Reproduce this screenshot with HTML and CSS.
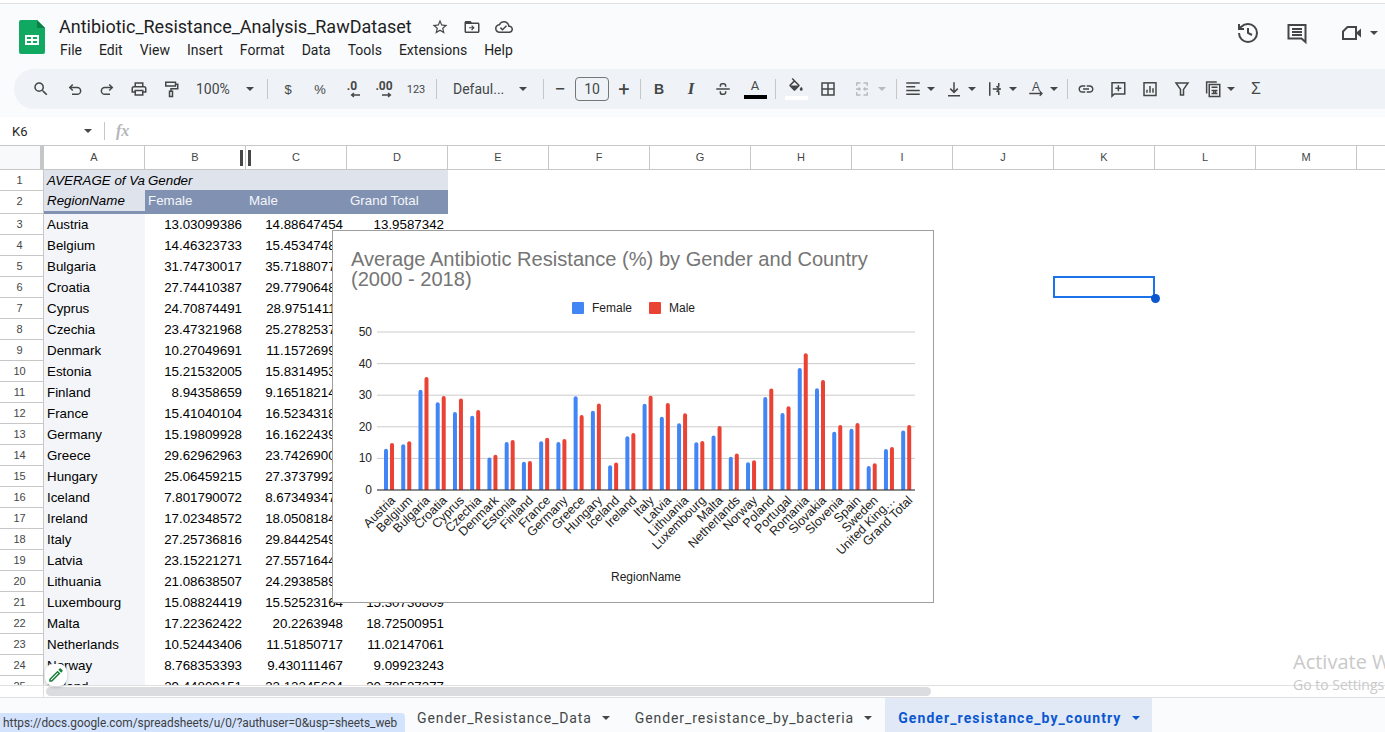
FILE: index.html
```html
<!DOCTYPE html>
<html lang="en">
<head>
  <meta charset="UTF-8" />
  <title>Antibiotic_Resistance_Analysis_RawDataset</title>
  <link rel="stylesheet" href="styles.css">
</head>
<body>
  <div class="top-strip"></div>

  <!-- Title, menu and toolbar -->
  <header class="app-header">
    <div class="doc-head">
      <svg class="logo" viewBox="0 0 26 34">
        <path fill="#11a861" d="M2 0h16l8 8v24a2 2 0 0 1-2 2H2a2 2 0 0 1-2-2V2a2 2 0 0 1 2-2z"/>
        <path fill="#0c8043" d="M18 0l8 8h-8z"/>
        <path fill="#fff" d="M6 15h14v10H6z"/>
        <path fill="#11a861" d="M8 17h4v2H8zM14 17h4v2h-4zM8 21h4v2H8zM14 21h4v2h-4z"/>
      </svg>
      <div class="doc-info">
        <div class="title-row">
          <span class="doc-title">Antibiotic_Resistance_Analysis_RawDataset</span>
          <svg class="title-icon" viewBox="0 0 24 24"><path d="M22 9.24l-7.19-.62L12 2 9.19 8.63 2 9.24l5.46 4.73L5.82 21 12 17.27 18.18 21l-1.63-7.03L22 9.24zM12 15.4l-3.76 2.27 1-4.28-3.32-2.88 4.38-.38L12 6.1l1.71 4.04 4.38.38-3.32 2.88 1 4.28L12 15.4z"/></svg>
          <svg class="title-icon" viewBox="0 0 24 24"><path d="M20 6h-8l-2-2H4c-1.1 0-2 .9-2 2v12c0 1.1.9 2 2 2h16c1.1 0 2-.9 2-2V8c0-1.1-.9-2-2-2zm0 12H4V8h16v10z"/><path d="M12 9.5l3.5 3.5-3.5 3.5-1.1-1.1 1.6-1.6H8v-1.6h4.500l-1.600-1.600z"/></svg>
          <svg class="title-icon" viewBox="0 0 24 24"><path d="M19.35 10.04C18.67 6.59 15.64 4 12 4 9.11 4 6.6 5.64 5.35 8.04 2.34 8.36 0 10.91 0 14c0 3.31 2.69 6 6 6h13c2.76 0 5-2.24 5-5 0-2.64-2.05-4.78-4.65-4.96zM19 18H6c-2.21 0-4-1.79-4-4 0-2.05 1.53-3.76 3.56-3.97l1.07-.11.5-.95C8.08 7.14 9.94 6 12 6c2.62 0 4.88 1.86 5.39 4.43l.3 1.5 1.53.11c1.56.1 2.78 1.41 2.78 2.96 0 1.65-1.35 3-3 3zm-9-3.82l-2.09-2.09L6.500 13.5 10 17l6.010-6.010-1.410-1.410z"/></svg>
        </div>
        <nav class="menu">
          <span>File</span><span>Edit</span><span>View</span><span>Insert</span><span>Format</span><span>Data</span><span>Tools</span><span>Extensions</span><span>Help</span>
        </nav>
      </div>
      <div class="doc-actions">
        <svg class="line-icon big" viewBox="0 0 24 24"><path d="M3 12a9 9 0 1 0 9-9 9.750 9.750 0 0 0-6.740 2.740L3 8"/><path d="M3 3v5h5"/><path d="M12 7v5l4 2"/></svg>
        <svg class="line-icon big" viewBox="0 0 24 24"><path d="M3.500 4h17v17l-4-3.500h-13z"/><path d="M7 8h10M7 11h10M7 14h10"/></svg>
        <svg class="line-icon big video" viewBox="0 0 24 24"><path d="M8.500 6H17v12H4V10.500z"/><path class="solid" d="M18 11l4-3.500v9L18 13z"/></svg>
        <span class="caret dark"></span>
      </div>
    </div>

    <div class="toolbar">
      <span class="tb-btn tb-search"><svg class="fill-icon" viewBox="0 0 24 24"><path d="M15.500 14h-.790l-.280-.270A6.470 6.470 0 0 0 16 9.500 6.500 6.500 0 1 0 9.500 16c1.610 0 3.090-.590 4.230-1.570l.270.280v.790l5 4.990L20.490 19l-4.990-5zm-6 0C7.010 14 5 11.990 5 9.500S7.010 5 9.500 5 14 7.010 14 9.500 11.990 14 9.500 14z"/></svg></span>
      <span class="tb-btn"><svg class="line-icon" viewBox="0 0 24 24"><path d="M9 6L5 10l4 4"/><path d="M5 10h10a4.500 4.500 0 0 1 0 9H8"/></svg></span>
      <span class="tb-btn"><svg class="line-icon" viewBox="0 0 24 24"><path d="M15 6l4 4-4 4"/><path d="M19 10H9a4.500 4.500 0 0 0 0 9h7"/></svg></span>
      <span class="tb-btn"><svg class="fill-icon" viewBox="0 0 24 24"><path d="M19 8h-1V3H6v5H5c-1.660 0-3 1.340-3 3v6h4v4h12v-4h4v-6c0-1.660-1.340-3-3-3zM8 5h8v3H8V5zm8 14H8v-4h8v4zm4-4h-2v-2H6v2H4v-4c0-.550.450-1 1-1h14c.550 0 1 .450 1 1v4z"/></svg></span>
      <span class="tb-btn"><svg class="line-icon" viewBox="0 0 24 24"><path d="M5 3h13v5H5z"/><path d="M18 5.500h3v6h-9v3.500"/><path d="M10 15h4v7h-4z"/></svg></span>
      <span class="tb-zoom">100%<span class="caret"></span></span>
      <span class="tb-sep"></span>
      <span class="tb-btn tb-text">$</span>
      <span class="tb-btn tb-text">%</span>
      <span class="tb-btn tb-decimal"><span>.0</span><svg viewBox="0 0 12 6"><path d="M11 3H3M5 1L2.500 3 5 5"/></svg></span>
      <span class="tb-btn tb-decimal"><span>.00</span><svg viewBox="0 0 12 6"><path d="M1 3h8M7 1l2.500 2L7 5"/></svg></span>
      <span class="tb-btn tb-small">123</span>
      <span class="tb-sep"></span>
      <span class="tb-font">Defaul...<span class="caret"></span></span>
      <span class="tb-sep"></span>
      <span class="tb-step">−</span>
      <span class="tb-size">10</span>
      <span class="tb-step">+</span>
      <span class="tb-sep tight"></span>
      <span class="tb-btn tb-bold">B</span>
      <span class="tb-btn tb-italic">I</span>
      <span class="tb-btn"><svg class="line-icon" viewBox="0 0 24 24"><path d="M3 12h18"/><path d="M8.500 9V7.500A2.500 2.500 0 0 1 11 5h2a2.500 2.500 0 0 1 2.500 2.500V9"/><path d="M8.500 15v1.500A2.500 2.500 0 0 0 11 19h2a2.500 2.500 0 0 0 2.500-2.500V15"/></svg></span>
      <span class="tb-btn tb-color"><span class="tb-color-a">A</span><span class="color-bar black"></span></span>
      <span class="tb-sep"></span>
      <span class="tb-btn tb-color"><svg class="fill-icon" viewBox="0 0 24 24"><path d="M16.560 8.940L7.620 0 6.210 1.410l2.380 2.380-5.150 5.150c-.590.590-.590 1.540 0 2.120l5.500 5.500c.290.290.680.440 1.060.440s.770-.150 1.060-.440l5.500-5.500c.590-.580.590-1.530 0-2.120zM5.210 10L10 5.210 14.790 10H5.210zM19 11.500s-2 2.170-2 3.500c0 1.100.900 2 2 2s2-.900 2-2c0-1.330-2-3.500-2-3.500z"/></svg><span class="color-bar white"></span></span>
      <span class="tb-btn"><svg class="fill-icon" viewBox="0 0 24 24"><path d="M3 3v18h18V3H3zm8 16H5v-6h6v6zm0-8H5V5h6v6zm8 8h-6v-6h6v6zm0-8h-6V5h6v6z"/></svg></span>
      <span class="tb-merge"><svg class="line-icon off" viewBox="0 0 24 24"><path d="M10 4H5v4M14 4h5v4M10 20H5v-4M14 20h5v-4M5 11v2M19 11v2M4 12h5M7.500 10L9.500 12l-2 2M20 12h-5M16.500 10l-2 2 2 2"/></svg><span class="caret off"></span></span>
      <span class="tb-sep"></span>
      <span class="tb-drop"><svg class="line-icon" viewBox="0 0 24 24"><path d="M3 4h18M3 9h12M3 14h18M3 19h18"/></svg><span class="caret"></span></span>
      <span class="tb-drop"><svg class="line-icon" viewBox="0 0 24 24"><path d="M12 3v13M7 11.500l5 5 5-5M4 21h16"/></svg><span class="caret"></span></span>
      <span class="tb-drop"><svg class="line-icon" viewBox="0 0 24 24"><path d="M5 3v18M17 4v5M17 15v5M9 12h11M14 8l4 4-4 4"/></svg><span class="caret"></span></span>
      <span class="tb-drop"><svg class="rotate-icon" viewBox="0 0 24 24"><text x="12" y="14" text-anchor="middle">A</text><path d="M3 18h17M17 15l3 3-3 3"/></svg><span class="caret"></span></span>
      <span class="tb-sep narrow"></span>
      <span class="tb-btn"><svg class="fill-icon" viewBox="0 0 24 24"><path d="M3.900 12c0-1.710 1.390-3.100 3.100-3.100h4V7H7c-2.760 0-5 2.240-5 5s2.240 5 5 5h4v-1.900H7c-1.710 0-3.100-1.390-3.100-3.100zM8 13h8v-2H8v2zm9-6h-4v1.900h4c1.710 0 3.100 1.390 3.100 3.100s-1.390 3.100-3.100 3.100h-4V17h4c2.760 0 5-2.240 5-5s-2.240-5-5-5z"/></svg></span>
      <span class="tb-btn"><svg class="line-icon" viewBox="0 0 24 24"><path d="M4 3.500h17v15H7L4 21.500z"/><path d="M12.500 7v8M8.500 11h8"/></svg></span>
      <span class="tb-btn"><svg class="line-icon" viewBox="0 0 24 24"><path d="M4 3.500h16v17H4z"/><path d="M8 17v-4M12 17V8M16 17v-6"/></svg></span>
      <span class="tb-btn"><svg class="line-icon" viewBox="0 0 24 24"><path d="M4 4h16l-6 8.500V20h-4v-7.500z"/></svg></span>
      <span class="tb-drop calc"><svg class="line-icon" viewBox="0 0 24 24"><path d="M7 6h14v16H7z"/><path d="M3.500 18V2.500H17"/><path d="M10 9.500h8M10 14h8M10 18h8M13 14v5M15.500 14v5"/></svg><span class="caret"></span></span>
      <span class="tb-btn tb-sigma">Σ</span>
    </div>
  </header>

  <div class="formula-bar">
    <span class="name-box">K6<span class="caret"></span></span>
    <span class="fx-sep"></span>
    <span class="fx">fx</span>
  </div>

  <!-- Sheet -->
  <main class="sheet">
    <div class="col-head">
      <div class="corner"></div>
      <div class="col">A</div><div class="col">B</div><div class="col">C</div><div class="col">D</div><div class="col">E</div><div class="col">F</div><div class="col">G</div><div class="col">H</div><div class="col">I</div><div class="col">J</div><div class="col">K</div><div class="col">L</div><div class="col">M</div><div class="col"></div>
    </div>
    <div class="rows">
      <div class="row short"><div class="num">1</div><div class="cell pivot-top italic">AVERAGE of Va</div><div class="cell pivot-top italic">Gender</div><div class="cell pivot-top"></div><div class="cell pivot-top"></div></div>
      <div class="row tall"><div class="num">2</div><div class="cell pivot-top italic band">RegionName</div><div class="cell pivot-head">Female</div><div class="cell pivot-head">Male</div><div class="cell pivot-head">Grand Total</div></div>
      <div class="row"><div class="num">3</div><div class="cell region">Austria</div><div class="cell val">13.03099386</div><div class="cell val">14.88647454</div><div class="cell val">13.9587342</div></div>
      <div class="row"><div class="num">4</div><div class="cell region">Belgium</div><div class="cell val">14.46323733</div><div class="cell val">15.45347483</div><div class="cell val"></div></div>
      <div class="row"><div class="num">5</div><div class="cell region">Bulgaria</div><div class="cell val">31.74730017</div><div class="cell val">35.71880771</div><div class="cell val"></div></div>
      <div class="row"><div class="num">6</div><div class="cell region">Croatia</div><div class="cell val">27.74410387</div><div class="cell val">29.77906482</div><div class="cell val"></div></div>
      <div class="row"><div class="num">7</div><div class="cell region">Cyprus</div><div class="cell val">24.70874491</div><div class="cell val">28.97514113</div><div class="cell val"></div></div>
      <div class="row"><div class="num">8</div><div class="cell region">Czechia</div><div class="cell val">23.47321968</div><div class="cell val">25.27825375</div><div class="cell val"></div></div>
      <div class="row"><div class="num">9</div><div class="cell region">Denmark</div><div class="cell val">10.27049691</div><div class="cell val">11.15726992</div><div class="cell val"></div></div>
      <div class="row"><div class="num">10</div><div class="cell region">Estonia</div><div class="cell val">15.21532005</div><div class="cell val">15.83149534</div><div class="cell val"></div></div>
      <div class="row"><div class="num">11</div><div class="cell region">Finland</div><div class="cell val">8.94358659</div><div class="cell val">9.165182141</div><div class="cell val"></div></div>
      <div class="row"><div class="num">12</div><div class="cell region">France</div><div class="cell val">15.41040104</div><div class="cell val">16.52343186</div><div class="cell val"></div></div>
      <div class="row"><div class="num">13</div><div class="cell region">Germany</div><div class="cell val">15.19809928</div><div class="cell val">16.16224392</div><div class="cell val"></div></div>
      <div class="row"><div class="num">14</div><div class="cell region">Greece</div><div class="cell val">29.62962963</div><div class="cell val">23.74269006</div><div class="cell val"></div></div>
      <div class="row"><div class="num">15</div><div class="cell region">Hungary</div><div class="cell val">25.06459215</div><div class="cell val">27.37379927</div><div class="cell val"></div></div>
      <div class="row"><div class="num">16</div><div class="cell region">Iceland</div><div class="cell val">7.801790072</div><div class="cell val">8.673493471</div><div class="cell val"></div></div>
      <div class="row"><div class="num">17</div><div class="cell region">Ireland</div><div class="cell val">17.02348572</div><div class="cell val">18.05081843</div><div class="cell val"></div></div>
      <div class="row"><div class="num">18</div><div class="cell region">Italy</div><div class="cell val">27.25736816</div><div class="cell val">29.84425492</div><div class="cell val"></div></div>
      <div class="row"><div class="num">19</div><div class="cell region">Latvia</div><div class="cell val">23.15221271</div><div class="cell val">27.55716443</div><div class="cell val"></div></div>
      <div class="row"><div class="num">20</div><div class="cell region">Lithuania</div><div class="cell val">21.08638507</div><div class="cell val">24.29385891</div><div class="cell val"></div></div>
      <div class="row"><div class="num">21</div><div class="cell region">Luxembourg</div><div class="cell val">15.08824419</div><div class="cell val">15.52523164</div><div class="cell val">15.30736809</div></div>
      <div class="row"><div class="num">22</div><div class="cell region">Malta</div><div class="cell val">17.22362422</div><div class="cell val">20.2263948</div><div class="cell val">18.72500951</div></div>
      <div class="row"><div class="num">23</div><div class="cell region">Netherlands</div><div class="cell val">10.52443406</div><div class="cell val">11.51850717</div><div class="cell val">11.02147061</div></div>
      <div class="row"><div class="num">24</div><div class="cell region">Norway</div><div class="cell val">8.768353393</div><div class="cell val">9.430111467</div><div class="cell val">9.09923243</div></div>
      <div class="row"><div class="num">25</div><div class="cell region">Poland</div><div class="cell val">29.44809151</div><div class="cell val">32.12245604</div><div class="cell val">30.78527377</div></div>
    </div>
  </main>

  <div class="hscroll"><div class="hscroll-gutter"></div><div class="hscroll-thumb"></div></div>

  <footer class="tabs">
    <div class="tab">Gender_Resistance_Data<span class="caret dark"></span></div>
    <div class="tab">Gender_resistance_by_bacteria<span class="caret dark"></span></div>
    <div class="tab active">Gender_resistance_by_country<span class="caret blue"></span></div>
  </footer>

  <!-- Things lying over the sheet -->
  <div class="resize-grip"></div>

  <div class="selection"><span class="fill-handle"></span></div>

  <div class="pencil">
    <svg viewBox="0 0 24 24"><path d="M3 17.250V21h3.750L17.810 9.940l-3.750-3.750L3 17.250zM5.920 19H5v-.920l9.060-9.060.920.920L5.920 19zM20.710 5.630l-2.340-2.340c-.200-.200-.450-.290-.710-.290s-.510.100-.700.290l-1.830 1.830 3.750 3.750 1.830-1.830a1 1 0 0 0 0-1.410z"/></svg>
  </div>

  <div class="chart">
    <svg id="chart-svg" viewBox="333 231 600 371" width="600" height="371">
      <text class="chart-title" x="351" y="266">Average Antibiotic Resistance (%) by Gender and Country</text>
      <text class="chart-title" x="351" y="286">(2000 - 2018)</text>
      <rect x="572" y="302" width="12" height="12" rx="1" fill="#4285f4"/>
      <text class="chart-text" x="592" y="312">Female</text>
      <rect x="649" y="302" width="12" height="12" rx="1" fill="#ea4335"/>
      <text class="chart-text" x="669" y="312">Male</text>
      <text class="chart-text" x="646" y="581" text-anchor="middle">RegionName</text>
    </svg>
  </div>

  <div class="watermark">
    <div class="wm-big">Activate Windows</div>
    <div class="wm-small">Go to Settings to activate Windows.</div>
  </div>

  <div class="link-tip">https://docs.google.com/spreadsheets/u/0/?authuser=0&amp;usp=sheets_web</div>

  <script>
    // Chart data: [label, female, male]
    const regions = [
      ["Austria", 13.03, 14.89], ["Belgium", 14.46, 15.45], ["Bulgaria", 31.75, 35.72],
      ["Croatia", 27.74, 29.78], ["Cyprus", 24.71, 28.98], ["Czechia", 23.47, 25.28],
      ["Denmark", 10.27, 11.16], ["Estonia", 15.22, 15.83], ["Finland", 8.94, 9.17],
      ["France", 15.41, 16.52], ["Germany", 15.2, 16.16], ["Greece", 29.63, 23.74],
      ["Hungary", 25.06, 27.37], ["Iceland", 7.8, 8.67], ["Ireland", 17.02, 18.05],
      ["Italy", 27.26, 29.84], ["Latvia", 23.15, 27.56], ["Lithuania", 21.09, 24.29],
      ["Luxembourg", 15.09, 15.53], ["Malta", 17.22, 20.23], ["Netherlands", 10.52, 11.52],
      ["Norway", 8.77, 9.43], ["Poland", 29.45, 32.12], ["Portugal", 24.4, 26.5],
      ["Romania", 38.6, 43.3], ["Slovakia", 32.2, 34.8], ["Slovenia", 18.4, 20.6],
      ["Spain", 19.4, 21.2], ["Sweden", 7.6, 8.5], ["United King…", 13, 13.6],
      ["Grand Total", 18.8, 20.6]
    ];

    const svg = document.getElementById("chart-svg");
    const baseY = 490, unit = 3.16, firstX = 389, pitch = 17.24;

    function add(tag, attrs, text) {
      const el = document.createElementNS("http://www.w3.org/2000/svg", tag);
      for (const key in attrs) el.setAttribute(key, attrs[key]);
      if (text) el.textContent = text;
      svg.appendChild(el);
      return el;
    }

    function bar(x, value, color) {
      const top = baseY - value * unit;
      add("path", {
        d: `M${x} ${baseY}V${top + 2}a2 2 0 0 1 4 0V${baseY}z`,
        fill: color
      });
    }

    // Grid lines and y labels
    for (let v = 0; v <= 50; v += 10) {
      const y = baseY - v * unit;
      add("line", { x1: 377, x2: 915, y1: y, y2: y, stroke: "#cccccc" });
      add("text", { class: "chart-text", x: 372, y: y + 4, "text-anchor": "end" }, String(v));
    }

    regions.forEach(([name, female, male], i) => {
      const cx = firstX + i * pitch;
      bar(cx - 5, female, "#4285f4");
      bar(cx + 1, male, "#ea4335");
      add("text", {
        class: "chart-text chart-tick",
        x: cx + 7,
        y: 501,
        "text-anchor": "end",
        transform: `rotate(-45 ${cx + 7} 501)`
      }, name);
    });

    add("line", { x1: 377, x2: 915, y1: baseY, y2: baseY, stroke: "#333333" });
  </script>
</body>
</html>
```

FILE: styles.css
```css
* {
  box-sizing: border-box;
}

body {
  margin: 0;
  width: 1385px;
  height: 732px;
  overflow: hidden;
  display: flex;
  flex-direction: column;
  background: white;
  color: #1f1f1f;
  font-family: 'Liberation Sans', Arial, sans-serif;
  position: relative;
}

.top-strip {
  height: 4px;
  flex: none;
  background: white;
  border-bottom: 1px solid #e0e0e0;
}

/* Header */
.app-header {
  height: 113px;
  flex: none;
  background: #f9fbfd;
}

.doc-head {
  height: 65px;
  display: flex;
  align-items: flex-start;
  padding-left: 19px;
  font-family: Roboto, sans-serif;
}

.logo {
  width: 26px;
  height: 34px;
  margin-top: 16px;
  flex: none;
}

.doc-info {
  margin-left: 14px;
  padding-top: 12px;
}

.title-row {
  display: flex;
  align-items: center;
  height: 22px;
}

.doc-title {
  font-size: 18px;
  line-height: 22px;
  color: #1f1f1f;
}

.title-icon {
  width: 18px;
  height: 18px;
  margin-left: 14px;
  fill: #444746;
}

.doc-title + .title-icon {
  margin-left: 19px;
}

.menu {
  display: flex;
  gap: 17px;
  margin-top: 2px;
  padding-left: 1px;
  font-size: 14px;
  line-height: 20px;
  color: #1f1f1f;
}

.doc-actions {
  margin-left: auto;
  margin-top: 17px;
  padding-right: 7px;
  display: flex;
  align-items: center;
  gap: 25px;
}

.doc-actions .caret {
  margin-left: -18px;
}

.doc-actions .video {
  margin-left: 5px;
}

.line-icon {
  width: 18px;
  height: 18px;
  fill: none;
  stroke: #444746;
  stroke-width: 2;
}

.line-icon.big {
  width: 24px;
  height: 24px;
}

.line-icon .solid {
  fill: #444746;
  stroke: none;
}

.line-icon.off {
  stroke: #b8bbbe;
  stroke-width: 1.8;
}

.fill-icon {
  width: 18px;
  height: 18px;
  fill: #444746;
}

.caret {
  display: inline-block;
  width: 0;
  height: 0;
  border-left: 4px solid transparent;
  border-right: 4px solid transparent;
  border-top: 4px solid #444746;
}

.caret.off {
  border-top-color: #b8bbbe;
}

.caret.blue {
  border-top-color: #0b57d0;
}

/* Toolbar */
.toolbar {
  height: 40px;
  margin-left: 14px;
  padding-left: 11px;
  display: flex;
  align-items: center;
  background: #eff3f8;
  border-radius: 20px 0 0 20px;
  color: #444746;
  font-family: Roboto, sans-serif;
}

.tb-btn {
  width: 32px;
  height: 30px;
  flex: none;
  display: flex;
  align-items: center;
  justify-content: center;
}

.tb-search {
  margin-right: 2px;
}

.tb-text {
  font-size: 13px;
  font-family: 'Liberation Sans', sans-serif;
}

.tb-small {
  font-size: 11px;
}

.tb-decimal {
  flex-direction: column;
  font-size: 12px;
  font-weight: 700;
  line-height: 11px;
}

.tb-decimal svg {
  width: 12px;
  height: 6px;
  margin-left: 6px;
  fill: none;
  stroke: #444746;
  stroke-width: 1.3;
}

.tb-zoom {
  width: 76px;
  flex: none;
  display: flex;
  align-items: center;
  padding-left: 9px;
  font-size: 14px;
}

.tb-zoom .caret {
  margin-left: 16px;
}

.tb-sep {
  width: 1px;
  height: 20px;
  flex: none;
  margin: 0 4px;
  background: #c7c7c7;
}

.tb-sep.narrow {
  margin: 0 2px;
}

.tb-sep.tight {
  margin: 0 2px 0 4px;
}

.tb-font {
  width: 98px;
  flex: none;
  display: flex;
  align-items: center;
  padding-left: 12px;
  font-size: 14px;
}

.tb-font .caret {
  margin-left: auto;
  margin-right: 12px;
}

.tb-step {
  width: 24px;
  flex: none;
  text-align: center;
  font-size: 20px;
  line-height: 24px;
}

.tb-size {
  width: 34px;
  height: 24px;
  flex: none;
  margin: 0 3px;
  border: 1px solid #747775;
  border-radius: 4px;
  text-align: center;
  font-size: 14px;
  line-height: 22px;
}

.tb-bold {
  font-family: 'Liberation Sans', sans-serif;
  font-size: 14px;
  font-weight: 700;
}

.tb-italic {
  font-family: 'Liberation Serif', serif;
  font-size: 17px;
  font-weight: 700;
  font-style: italic;
}

.tb-color {
  flex-direction: column;
}

.tb-color-a {
  font-size: 13px;
  line-height: 14px;
}

.color-bar {
  width: 23px;
  height: 4px;
  margin-top: 2px;
}

.color-bar.black {
  background: black;
}

.color-bar.white {
  background: white;
  margin-top: 0;
}

.tb-merge {
  width: 48px;
  flex: none;
  display: flex;
  align-items: center;
  padding-left: 9px;
}

.tb-merge .caret {
  margin-left: 7px;
}

.tb-drop {
  width: 41px;
  flex: none;
  display: flex;
  align-items: center;
  padding-left: 3px;
}

.tb-drop .caret {
  margin-left: 5px;
}

.tb-drop.calc {
  width: 42px;
  padding-left: 6px;
}

.rotate-icon {
  width: 18px;
  height: 18px;
  fill: none;
  stroke: #444746;
  stroke-width: 1.8;
}

.rotate-icon text {
  fill: #444746;
  stroke: none;
  font-size: 16px;
  font-family: 'Liberation Sans', sans-serif;
}

.tb-sigma {
  font-size: 16px;
  font-family: 'Liberation Sans', sans-serif;
}

/* Formula bar */
.formula-bar {
  height: 28px;
  flex: none;
  display: flex;
  align-items: center;
  background: white;
}

.name-box {
  width: 104px;
  display: flex;
  align-items: center;
  padding-left: 12px;
  padding-right: 12px;
  justify-content: space-between;
  font-family: Roboto, sans-serif;
  font-size: 13px;
}

.fx-sep {
  width: 1px;
  height: 18px;
  background: #c7c7c7;
}

.fx {
  margin-left: 11px;
  font-family: 'Liberation Serif', serif;
  font-style: italic;
  font-weight: 700;
  font-size: 16px;
  color: #b4b7ba;
}

/* Sheet */
.sheet {
  height: 540px;
  flex: none;
  overflow: hidden;
}

.col-head {
  height: 25px;
  display: flex;
  border-top: 1px solid #c7c7c7;
  border-bottom: 1px solid #c7c7c7;
}

.corner {
  width: 44px;
  flex: none;
  background: #f8f9fa;
  border-right: 4px solid #c4c7c5;
}

.col {
  width: 101px;
  flex: none;
  border-right: 1px solid #c7c7c7;
  text-align: center;
  font-size: 11px;
  line-height: 23px;
  color: #444746;
}

.rows {
  height: 515px;
  overflow: hidden;
}

.row {
  display: grid;
  grid-template-columns: 44px repeat(4, 101px);
  height: 21px;
  font-size: 13.33px;
  line-height: 20px;
  color: #000;
}

.row.short {
  height: 21px;
}

.row.tall {
  height: 23px;
}

.num {
  border-right: 1px solid #c7c7c7;
  border-bottom: 1px solid #c7c7c7;
  text-align: center;
  font-size: 11px;
  color: #444746;
  padding-right: 4px;
}

.cell {
  padding: 1px 4px 0 3px;
  white-space: nowrap;
  overflow: hidden;
}

.italic {
  font-style: italic;
}

.pivot-top {
  background: #dfe3ec;
}

.band {
  padding-top: 0;
  border-bottom: 3px solid #8091b2;
}

.pivot-head {
  padding-top: 0;
  background: #8091b2;
  box-shadow: 0 -1px 0 #8091b2;
  color: #f4f6fa;
}

.region {
  background: #f3f5f8;
}

.val {
  text-align: right;
}

.hscroll {
  height: 13px;
  flex: none;
  display: flex;
  align-items: center;
  border-top: 1px solid #e0e0e0;
  border-bottom: 1px solid #e0e0e0;
}

.hscroll-gutter {
  width: 44px;
  height: 100%;
  flex: none;
  border-right: 1px solid #e0e0e0;
}

.hscroll-thumb {
  width: 885px;
  height: 9px;
  margin-left: 2px;
  border-radius: 5px;
  background: #dadce0;
}

/* Sheet tabs */
.tabs {
  height: 34px;
  flex: none;
  display: flex;
  padding-left: 405px;
  gap: 5px;
  background: #f9fbfd;
  font-family: Roboto, sans-serif;
  font-size: 14px;
  letter-spacing: 0.9px;
  color: #444746;
}

.tab {
  display: flex;
  align-items: center;
  padding: 5px 8px 0 12px;
}

.tab .caret {
  margin-left: 10px;
}

.tab.active {
  background: #e1e9f7;
  color: #0b57d0;
  font-weight: 700;
  letter-spacing: 1.1px;
  padding-left: 13px;
  padding-right: 12px;
}

/* Overlays */
.resize-grip {
  position: absolute;
  left: 240px;
  top: 150px;
  width: 11px;
  height: 16px;
  border-left: 3px solid #444746;
  border-right: 3px solid #444746;
}

.selection {
  position: absolute;
  left: 1053px;
  top: 276px;
  width: 102px;
  height: 22px;
  border: 2px solid #1a73e8;
}

.fill-handle {
  position: absolute;
  right: -7px;
  bottom: -7px;
  width: 9px;
  height: 9px;
  border-radius: 50%;
  background: #0b57d0;
}

.pencil {
  position: absolute;
  left: 45px;
  top: 664px;
  width: 22px;
  height: 22px;
  display: flex;
  align-items: center;
  justify-content: center;
  background: white;
  border-radius: 8px;
  box-shadow: 0 1px 3px rgba(60, 64, 67, 0.3);
}

.pencil svg {
  width: 18px;
  height: 18px;
  fill: #188038;
}

.chart {
  position: absolute;
  left: 332px;
  top: 230px;
  width: 602px;
  height: 373px;
  background: white;
  border: 1px solid #9e9e9e;
}

.chart svg {
  display: block;
}

.chart-title {
  font-size: 20.1px;
  fill: #757575;
}

.chart-text {
  font-size: 12px;
  fill: #222222;
}

.chart-tick {
  font-size: 12.5px;
}

.watermark {
  position: absolute;
  left: 1293px;
  top: 649px;
  white-space: nowrap;
  font-family: 'Open Sans', sans-serif;
  color: #c9c9c9;
}

.wm-big {
  font-size: 20px;
  line-height: 26px;
}

.wm-small {
  font-size: 14px;
  line-height: 20px;
}

.link-tip {
  position: absolute;
  left: 0;
  bottom: 0;
  width: 405px;
  height: 19px;
  padding-left: 3px;
  background: #d3e3fd;
  border-top-right-radius: 4px;
  font-family: Roboto, sans-serif;
  font-size: 11.85px;
  line-height: 21px;
  white-space: nowrap;
  color: #3c4043;
}
```
